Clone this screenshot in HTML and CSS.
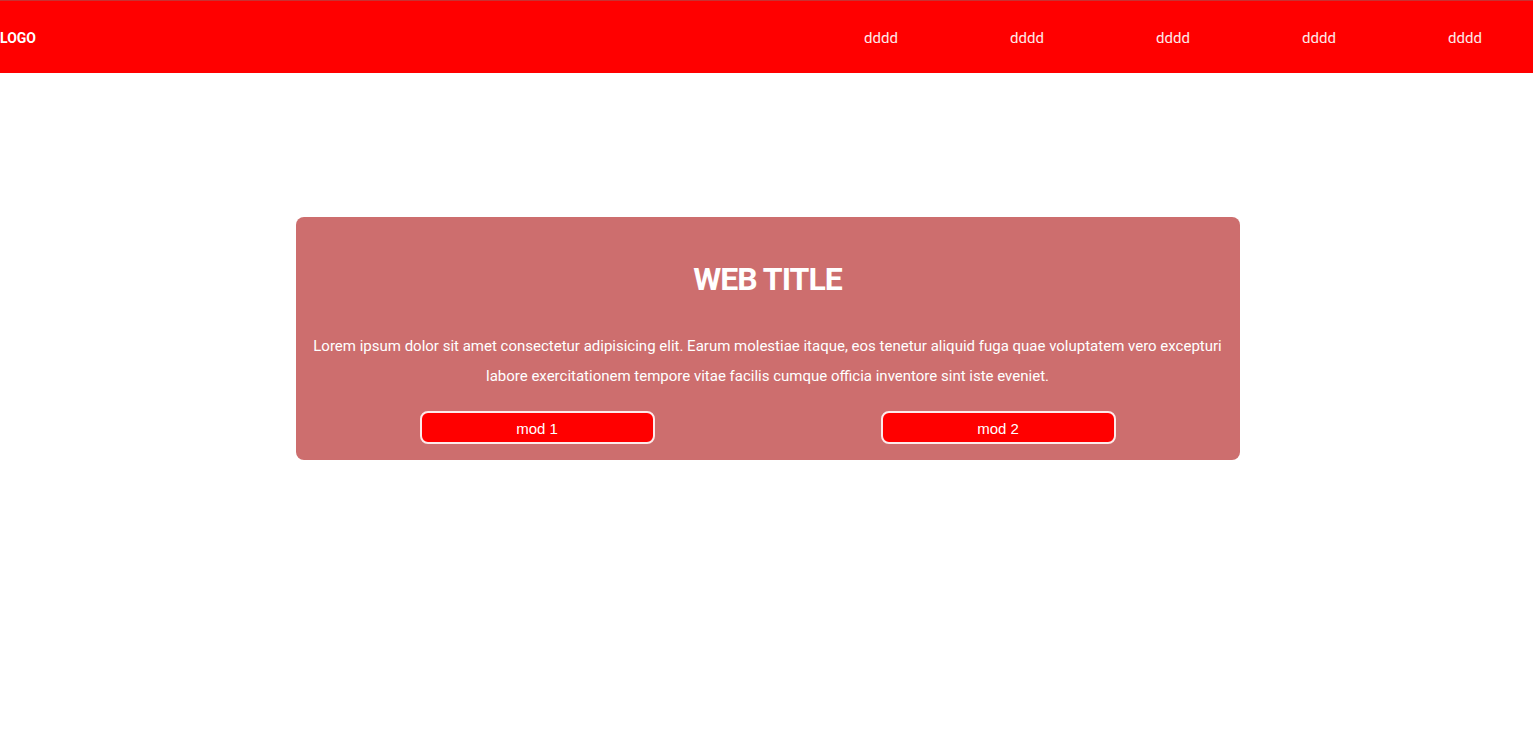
FILE: index.html
```html
<!DOCTYPE html>
<html lang="en">
<head>
<meta charset="utf-8">
<title>Web Title</title>
<link rel="stylesheet" href="styles.css">
</head>
<body>
<header class="topbar">
  <div class="logo">LOGO</div>
  <nav class="nav">
    <ul class="nav-list">
      <li class="nav-item">dddd</li>
      <li class="nav-item">dddd</li>
      <li class="nav-item">dddd</li>
      <li class="nav-item">dddd</li>
      <li class="nav-item">dddd</li>
    </ul>
  </nav>
</header>
<main class="main">
  <section class="card">
    <h1 class="card-title">WEB TITLE</h1>
    <p class="card-text">Lorem ipsum dolor sit amet consectetur adipisicing elit. Earum molestiae itaque, eos tenetur aliquid fuga quae voluptatem vero excepturi labore exercitationem tempore vitae facilis cumque officia inventore sint iste eveniet.</p>
    <div class="card-actions">
      <button class="btn">mod 1</button>
      <button class="btn">mod 2</button>
    </div>
  </section>
</main>
</body>
</html>
```

FILE: styles.css
```css
* {
  box-sizing: border-box;
}

body {
  margin: 0;
  background: #ffffff;
  font-family: Roboto, "Liberation Sans", sans-serif;
  color: #ffffff;
}

.topbar {
  height: 73px;
  background: #ff0000;
  border-top: 1px solid #c83232;
  padding-top: 2px;
  display: flex;
  align-items: center;
  justify-content: space-between;
}

.logo {
  font-weight: 700;
  font-size: 14px;
  color: #ffffff;
}

.nav {
  margin-right: -5px;
}

.nav-list {
  list-style: none;
  margin: 0;
  padding: 0;
  display: flex;
}

.nav-item {
  width: 146px;
  text-align: center;
  font-size: 15px;
  color: #fde9e9;
}

.main {
  padding-top: 144px;
  padding-left: 2px;
}

.card {
  width: 944px;
  margin: 0 auto;
  background: #cd6e6e;
  border-radius: 8px;
  padding: 16px;
  text-align: center;
}

.card-title {
  margin: 26px 0 32px;
  font-size: 32px;
  line-height: 40px;
  font-weight: 700;
  letter-spacing: -1px;
}

.card-text {
  margin: 0;
  font-size: 15px;
  line-height: 30px;
}

.card-actions {
  margin-top: 20px;
  display: flex;
  justify-content: center;
  gap: 226px;
}

.btn {
  width: 235px;
  height: 33px;
  background: #ff0000;
  border: 2px solid #fdeaea;
  border-radius: 8px;
  color: #ffffff;
  font-family: "Liberation Sans", Arial, sans-serif;
  font-size: 15px;
  padding: 2px 0 0;
}
```
